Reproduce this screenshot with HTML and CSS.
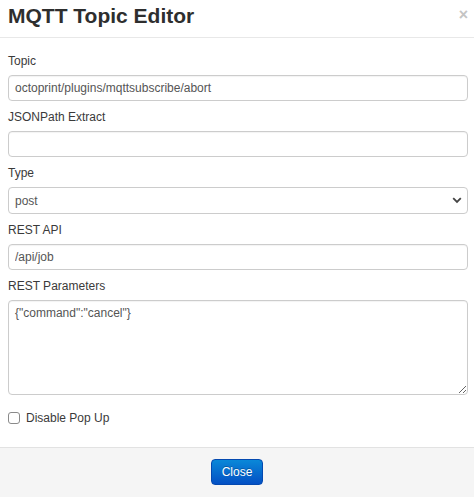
FILE: index.html
```html
<!DOCTYPE html>
<html>
<head>
<meta charset="utf-8">
<link rel="stylesheet" href="styles.css">
</head>
<body>
<div class="modal">
  <div class="modal-header">
    <h3 class="title">MQTT Topic Editor</h3>
    <button class="close" type="button">×</button>
  </div>
  <div class="modal-body">
    <div class="field">
      <label class="label">Topic</label>
      <input class="control" type="text" value="octoprint/plugins/mqttsubscribe/abort">
    </div>
    <div class="field">
      <label class="label">JSONPath Extract</label>
      <input class="control" type="text" value="">
    </div>
    <div class="field">
      <label class="label">Type</label>
      <div class="select-wrap">
        <select class="control select"><option>post</option></select>
        <svg class="chevron" width="10" height="7" viewBox="0 0 10 7"><path d="M1.2 1.2 L5 5 L8.8 1.2" fill="none" stroke="#444" stroke-width="1.8"/></svg>
      </div>
    </div>
    <div class="field">
      <label class="label">REST API</label>
      <input class="control" type="text" value="/api/job">
    </div>
    <div class="field">
      <label class="label">REST Parameters</label>
      <textarea class="control textarea">{"command":"cancel"}</textarea>
    </div>
    <label class="check-row">
      <input class="check" type="checkbox">
      <span>Disable Pop Up</span>
    </label>
  </div>
  <div class="modal-footer">
    <button class="btn-primary" type="button">Close</button>
  </div>
</div>
</body>
</html>
```

FILE: styles.css
```css
html, body {
  margin: 0;
  padding: 0;
  background: #fff;
}
body {
  font-family: "Liberation Sans", Arial, sans-serif;
  color: #333;
  width: 474px;
  height: 497px;
  overflow: hidden;
}
.modal {
  display: flex;
  flex-direction: column;
  height: 497px;
}
.modal-header {
  height: 38px;
  box-sizing: border-box;
  border-bottom: 1px solid #e8e8e8;
  display: flex;
  align-items: flex-start;
  justify-content: space-between;
  padding: 0 8px;
}
.title {
  margin: 0;
  font-size: 21px;
  font-weight: bold;
  line-height: 32px;
  color: #2e2e2e;
}
.close {
  border: 0;
  background: none;
  padding: 0;
  margin: 5px -2px 0 0;
  font-family: "Liberation Sans", Arial, sans-serif;
  font-size: 16px;
  font-weight: bold;
  line-height: 20px;
  color: #c4c4c4;
}
.modal-body {
  flex: 1;
  padding: 14px 6px 0 8px;
  display: flex;
  flex-direction: column;
}
.field {
  display: flex;
  flex-direction: column;
  margin-bottom: 7px;
}
.label {
  font-size: 12px;
  line-height: 18px;
  margin-bottom: 5px;
  color: #3a3a3a;
}
.control {
  box-sizing: border-box;
  width: 460px;
  height: 26px;
  border: 1px solid #cccccc;
  border-radius: 4px;
  padding: 0 6px;
  font-family: "Liberation Sans", Arial, sans-serif;
  font-size: 12px;
  color: #555;
  background: #fff;
  margin: 0;
  outline: none;
  box-shadow: inset 0 1px 1px rgba(0,0,0,0.05);
}
.select-wrap {
  position: relative;
  width: 460px;
}
.select {
  appearance: none;
  -webkit-appearance: none;
  height: 27px;
  box-shadow: none;
}
.chevron {
  position: absolute;
  right: 6px;
  top: 10px;
}
.textarea {
  height: 95px;
  padding: 4px 6px;
  resize: vertical;
  line-height: 16px;
}
.check-row {
  display: flex;
  align-items: center;
  gap: 6px;
  margin-top: 7px;
  font-size: 12px;
  color: #3a3a3a;
  line-height: 18px;
}
.check {
  appearance: none;
  -webkit-appearance: none;
  width: 12px;
  height: 12px;
  border: 1px solid #8a8a8a;
  border-radius: 3px;
  margin: 0;
  background: #fff;
}
.modal-footer {
  height: 50px;
  box-sizing: border-box;
  background: #f5f5f5;
  border-top: 1px solid #e2e2e2;
  display: flex;
  justify-content: center;
  align-items: flex-start;
  padding-top: 11px;
}
.btn-primary {
  width: 52px;
  height: 26px;
  border: 1px solid #0449b0;
  border-radius: 4px;
  background: linear-gradient(to bottom, #0a88d8, #0450c4);
  color: #fff;
  font-family: "Liberation Sans", Arial, sans-serif;
  font-size: 12px;
  padding: 0;
  text-shadow: 0 -1px 0 rgba(0,0,0,0.25);
}
```
